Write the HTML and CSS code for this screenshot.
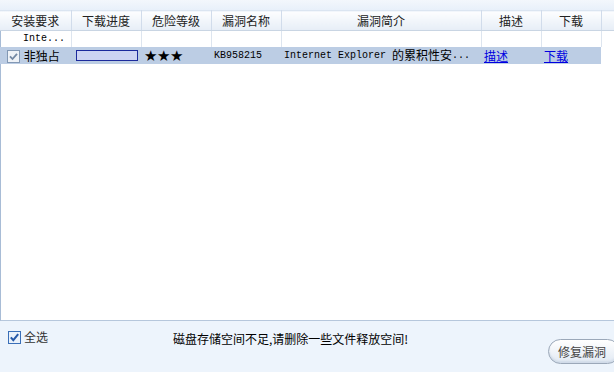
FILE: index.html
```html
<!DOCTYPE html>
<html>

<head>
	<meta charset="UTF-8">
	<title>漏洞修复</title>
	<link rel="stylesheet" href="styles.css">
</head>

<body>
	<div class="page">
		<div class="top-band"></div>

		<div class="list">
			<table class="grid">
				<colgroup>
					<col class="c-req">
					<col class="c-prog">
					<col class="c-level">
					<col class="c-name">
					<col class="c-desc">
					<col class="c-link">
					<col class="c-link">
					<col>
				</colgroup>
				<thead>
					<tr>
						<th>安装要求</th>
						<th>下载进度</th>
						<th>危险等级</th>
						<th>漏洞名称</th>
						<th>漏洞简介</th>
						<th>描述</th>
						<th>下载</th>
						<th class="filler"></th>
					</tr>
				</thead>
				<tbody>
					<tr class="group-row">
						<td class="group-name">Inte...</td>
						<td></td>
						<td></td>
						<td></td>
						<td></td>
						<td></td>
						<td></td>
						<td class="filler"></td>
					</tr>
					<tr class="selected">
						<td class="req">
							<svg class="check" width="13" height="13" viewBox="0 0 13 13">
								<rect x="0.5" y="0.5" width="12" height="12" fill="#eef2f7" stroke="#8298b4" />
								<path d="M3 6.3 L5.5 9 L10 3.8" fill="none" stroke="#7489a4" stroke-width="1.8" />
							</svg>
							<span>非独占</span>
						</td>
						<td><div class="progress"></div></td>
						<td class="stars">★★★</td>
						<td><span class="latin">KB958215</span></td>
						<td><span class="latin">Internet Explorer </span>的累积性安<span class="latin">...</span></td>
						<td><a href="#">描述</a></td>
						<td><a href="#">下载</a></td>
						<td class="filler blank"></td>
					</tr>
				</tbody>
			</table>
		</div>

		<div class="footer">
			<label class="select-all">
				<svg width="13" height="13" viewBox="0 0 13 13">
					<rect x="0.5" y="0.5" width="12" height="12" fill="#e9f1fb" stroke="#3a6fb8" />
					<path d="M2.8 6.3 L5.3 9.2 L10.2 3.2" fill="none" stroke="#2458a8" stroke-width="2" />
				</svg>
				全选
			</label>
			<p class="message">磁盘存储空间不足,请删除一些文件释放空间!</p>
			<button class="fix-button" type="button">修复漏洞</button>
		</div>
	</div>
</body>

</html>
```

FILE: styles.css
```css
body {
	margin: 0;
	font-family: "Noto Sans CJK SC", "Liberation Sans", sans-serif;
	font-size: 12px;
	color: #000;
}

.page {
	width: 614px;
	height: 372px;
	background: #edf4fc;
	overflow: hidden;
	display: flex;
	flex-direction: column;
}

.top-band {
	height: 10px;
	flex-shrink: 0;
	background: linear-gradient(#f3f7fc, #e8f0fa);
}

.list {
	height: 311px;
	flex-shrink: 0;
	background: #fff;
	border-left: 1px solid #a8bcd6;
	border-bottom: 1px solid #b6c7dc;
	box-sizing: border-box;
}

.grid {
	margin-left: -1px;
	width: 615px;
	table-layout: fixed;
	border-collapse: collapse;
}

.c-req {
	width: 71px;
}

.c-prog,
.c-level,
.c-name {
	width: 70px;
}

.c-desc {
	width: 200px;
}

.c-link {
	width: 60px;
}

th {
	height: 20px;
	padding: 0;
	font-weight: normal;
	color: #222;
	line-height: 18px;
	background: linear-gradient(#fdfeff, #e6edf6);
	border-top: 1px solid #dbe5f1;
	border-bottom: 1px solid #c9d5e3;
	border-right: 1px solid #d1dceb;
	box-sizing: border-box;
	white-space: nowrap;
	overflow: hidden;
}

td {
	padding: 0 0 0 3px;
	white-space: nowrap;
	overflow: hidden;
	line-height: 16px;
}

.group-row td {
	height: 16px;
	border-right: 1px solid #dde5ef;
	box-sizing: border-box;
}

.group-row .filler {
	border-right: none;
}

.group-name {
	padding-left: 23px;
	font-family: "Liberation Mono", monospace;
	font-size: 10px;
}

.latin {
	font-family: "Liberation Mono", monospace;
	font-size: 10px;
	line-height: 17px;
	vertical-align: top;
}

.selected td {
	height: 17px;
	background: #bccde4;
	line-height: 16px;
	vertical-align: middle;
}

.selected .blank {
	background: #fff;
}

.req {
	padding-left: 7px;
}

.req .check {
	vertical-align: -2px;
	margin-right: 1px;
}

.progress {
	width: 60px;
	height: 9px;
	margin-left: 2px;
	border: 1px solid #1c2a9c;
	background: #cdd4f2;
}

.stars {
	font-family: "DejaVu Sans", sans-serif;
	font-size: 15px;
	letter-spacing: -0.5px;
	line-height: 16px;
}

a {
	color: #0000e0;
}

.footer {
	flex: 1;
	display: flex;
	align-items: flex-start;
	padding: 9px 0 0 8px;
}

.select-all {
	display: flex;
	align-items: center;
	gap: 3px;
	color: #333;
	line-height: 14px;
}

.message {
	margin: 1px 0 0 125px;
	line-height: 16px;
}

.fix-button {
	margin: 9px -6px 0 auto;
	width: 72px;
	height: 25px;
	padding: 0 0 0 9px;
	text-align: left;
	font-family: "Noto Sans CJK SC", sans-serif;
	font-size: 12px;
	color: #444;
	border: 1px solid #9ba8b9;
	border-radius: 13px;
	background: linear-gradient(#ffffff, #e1e9f3);
	box-shadow: inset 0 -2px 2px #d0dbe8;
}
```
